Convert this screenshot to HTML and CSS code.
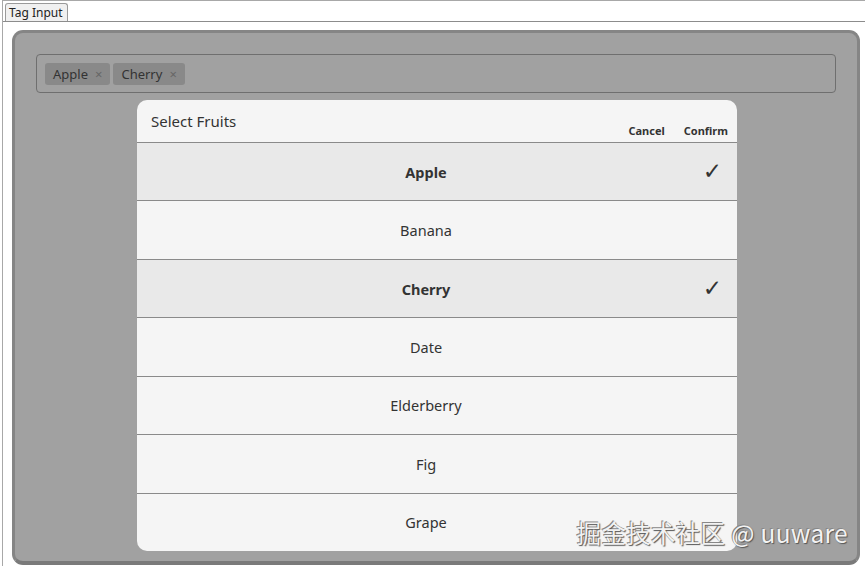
FILE: index.html
```html
<!DOCTYPE html>
<html>
<head>
<meta charset="utf-8">
<link rel="stylesheet" href="styles.css">
</head>
<body>
<div class="window">
  <div class="tabs"><div class="tab">Tag Input</div></div>
  <div class="content">
    <div class="panel">
      <div class="input">
        <span class="chip">Apple <span class="x">×</span></span>
        <span class="chip">Cherry <span class="x">×</span></span>
      </div>
      <div class="dialog">
        <div class="head">
          <div class="title">Select Fruits</div>
          <div class="actions"><span>Cancel</span><span>Confirm</span></div>
        </div>
        <div class="list">
          <div class="row sel">Apple<span class="check">✓</span></div>
          <div class="row">Banana</div>
          <div class="row sel">Cherry<span class="check">✓</span></div>
          <div class="row">Date</div>
          <div class="row">Elderberry</div>
          <div class="row">Fig</div>
          <div class="row last">Grape</div>
        </div>
      </div>
      <div class="mark">掘金技术社区 @ uuware</div>
    </div>
  </div>
</div>
</body>
</html>
```
FILE: styles.css
```css
html, body { margin: 0; padding: 0; background: #fff; }
body { font-family: "Noto Sans", "Open Sans", sans-serif; color: #333; }
.window {
  margin-left: 2px;
  height: 566px;
  border-left: 1px solid #a8a8a8;
  border-top: 1px solid #a8a8a8;
  box-sizing: border-box;
}
.tabs {
  height: 20px;
  border-bottom: 1px solid #8c8c8c;
  display: flex;
  align-items: flex-end;
  padding-left: 2px;
}
.tab {
  height: 18px;
  box-sizing: border-box;
  border: 1px solid #9a9a9a;
  border-bottom: none;
  border-radius: 3px 3px 0 0;
  background: #f0f0f0;
  font-size: 12px;
  line-height: 17px;
  padding: 0 4px 0 3px;
  color: #222;
}
.content { padding: 8px 4px 0 9px; }
.panel {
  position: relative;
  width: 848px;
  height: 535px;
  box-sizing: border-box;
  border: 3px solid #858585;
  border-bottom-width: 4px;
  border-bottom-color: #7a7a7a;
  border-radius: 11px;
  background: #a1a1a1;
  padding: 21px 21px 0 21px;
}
.input {
  height: 39px;
  box-sizing: border-box;
  border: 1px solid #6f6f6f;
  border-radius: 4px;
  display: flex;
  align-items: center;
  gap: 3px;
  padding-left: 8px;
}
.chip {
  display: inline-flex;
  align-items: center;
  height: 22px;
  background: #898989;
  border-radius: 3px;
  padding: 0 8px 0 8px;
  font-size: 13px;
  color: #333;
}
.x { margin-left: 7px; font-size: 13px; color: #666; }
.dialog {
  position: absolute;
  left: 122px;
  top: 67px;
  width: 600px;
  height: 451px;
  background: #f5f5f5;
  border-radius: 10px;
  overflow: hidden;
  display: flex;
  flex-direction: column;
}
.head {
  height: 42px;
  display: flex;
  justify-content: space-between;
  border-bottom: 1px solid #8a8a8a;
}
.title { font-size: 15px; padding: 11px 0 0 14px; color: #333; }
.actions {
  display: flex;
  gap: 19px;
  padding: 23px 9px 0 0;
  font-size: 11px;
  font-weight: bold;
  color: #333;
}
.list { flex: 1; display: flex; flex-direction: column; }
.row {
  flex: 1;
  position: relative;
  display: flex;
  align-items: center;
  justify-content: center;
  padding-right: 22px;
  border-bottom: 1px solid #8a8a8a;
  font-size: 14.5px;
  color: #333;
}
.row.last { border-bottom: none; }
.row.sel { background: #e9e9e9; font-weight: bold; }
.check {
  position: absolute;
  right: 15px;
  top: 50%;
  transform: translateY(-55%);
  font-family: "DejaVu Sans", sans-serif;
  font-weight: normal;
  font-size: 23px;
  color: #333;
}
.mark {
  position: absolute;
  right: 9px;
  bottom: 11px;
  font-family: "Noto Sans CJK SC", "Liberation Sans", sans-serif;
  font-size: 24.5px;
  color: #f2f2f2;
  text-shadow: 1px 1px 1px #555, -1px -1px 0 #888;
  letter-spacing: 0.3px;
}
```
